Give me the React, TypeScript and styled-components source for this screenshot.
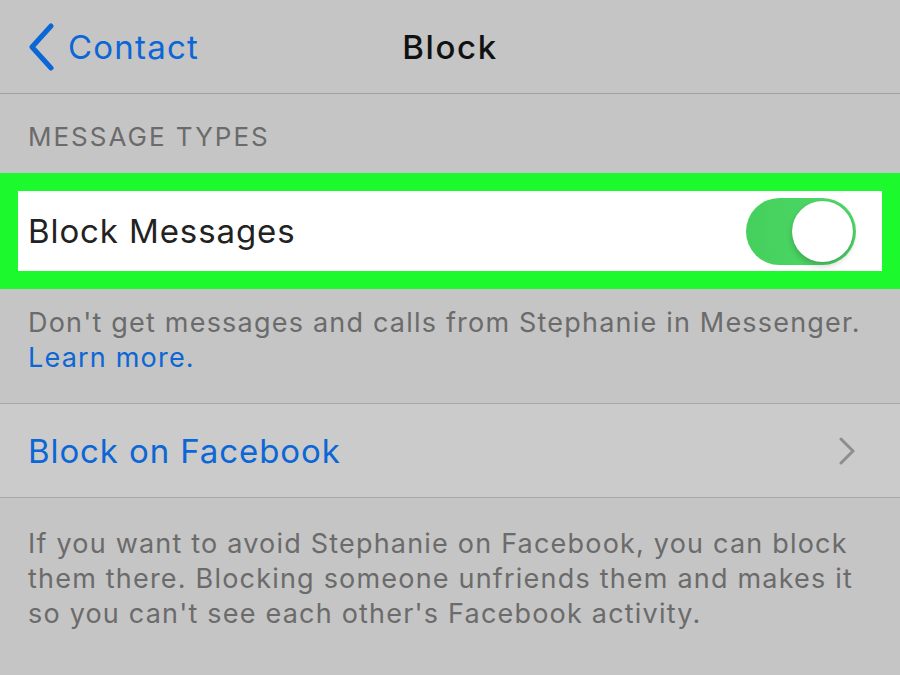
import styled, { createGlobalStyle } from 'styled-components';

const GlobalStyle = createGlobalStyle`
  html, body {
    margin: 0;
    padding: 0;
    background: #c5c5c5;
  }
  body {
    font-family: Inter, "Open Sans", "Liberation Sans", sans-serif;
    -webkit-font-smoothing: antialiased;
  }
`;

const Screen = styled.div`
  width: 900px;
  height: 675px;
  overflow: hidden;
  background: #c5c5c5;
`;

const NavBar = styled.div`
  height: 94px;
  display: grid;
  grid-template-columns: 1fr auto 1fr;
  align-items: center;
  border-bottom: 1px solid #a2a2a2;
  box-sizing: border-box;
`;

const BackLink = styled.div`
  display: flex;
  align-items: center;
  gap: 13px;
  padding-left: 28px;
  color: #0b66d6;
  font-size: 33px;
  letter-spacing: 1.2px;
  svg {
    width: 27px;
    height: 48px;
  }
`;

const Title = styled.div`
  font-size: 33px;
  font-weight: 500;
  color: #111;
  letter-spacing: 1.6px;
`;

const SectionHeader = styled.div`
  padding: 26px 28px 0;
  height: 79px;
  box-sizing: border-box;
  font-size: 26px;
  color: #6b6b6b;
  letter-spacing: 2px;
  line-height: 34px;
`;

const Highlight = styled.div`
  border: 18px solid #1cf92c;
`;

const ToggleRow = styled.div`
  height: 80px;
  background: #fff;
  display: flex;
  align-items: center;
  justify-content: space-between;
  padding: 0 26px 0 10px;
`;

const RowLabel = styled.span<{ $link?: boolean }>`
  font-size: 33px;
  letter-spacing: 0.9px;
  color: ${p => (p.$link ? '#0b66d6' : '#222')};
`;

const Switch = styled.div`
  position: relative;
  width: 110px;
  height: 67px;
  border-radius: 34px;
  background: linear-gradient(90deg, #45d05e, #4fd867);
`;

const Knob = styled.div`
  position: absolute;
  top: 3px;
  right: 3px;
  width: 61px;
  height: 61px;
  border-radius: 50%;
  background: #fff;
  box-shadow: 0 4px 6px rgba(0, 0, 0, 0.18), 0 0 1px rgba(0, 0, 0, 0.2);
`;

const Note = styled.p`
  margin: 0;
  padding: 16px 18px 0 28px;
  font-size: 27px;
  line-height: 35px;
  color: #6b6b6b;
  letter-spacing: 1.2px;
`;

const Link = styled.span`
  color: #0b66d6;
`;

const FirstNote = styled(Note)`
  height: 114px;
  box-sizing: border-box;
`;

const Cell = styled.div`
  height: 95px;
  box-sizing: border-box;
  border-top: 1px solid #a8a8a8;
  border-bottom: 1px solid #a8a8a8;
  background: #cbcbcb;
  display: flex;
  align-items: center;
  justify-content: space-between;
  padding: 0 44px 0 28px;
  svg {
    width: 17px;
    height: 28px;
  }
`;

const SecondNote = styled(Note)`
  padding-top: 28px;
`;

const BackChevron = () => (
  <svg viewBox="0 0 27 48" fill="none">
    <path d="M23 3 L4 24 L23 45" stroke="#0b66d6" strokeWidth="5" strokeLinecap="round" strokeLinejoin="round" />
  </svg>
);

const RowChevron = () => (
  <svg viewBox="0 0 17 28" fill="none">
    <path d="M2 2 L14 14 L2 26" stroke="#8e8e8e" strokeWidth="3" strokeLinecap="round" strokeLinejoin="round" />
  </svg>
);

const App = () => {
  return (
    <>
      <GlobalStyle />
      <Screen>
        <NavBar>
          <BackLink>
            <BackChevron />
            Contact
          </BackLink>
          <Title>Block</Title>
          <div />
        </NavBar>
        <SectionHeader>MESSAGE TYPES</SectionHeader>
        <Highlight>
          <ToggleRow>
            <RowLabel>Block Messages</RowLabel>
            <Switch>
              <Knob />
            </Switch>
          </ToggleRow>
        </Highlight>
        <FirstNote>
          Don't get messages and calls from Stephanie in Messenger.
          <br />
          <Link>Learn more.</Link>
        </FirstNote>
        <Cell>
          <RowLabel $link>Block on Facebook</RowLabel>
          <RowChevron />
        </Cell>
        <SecondNote>
          If you want to avoid Stephanie on Facebook, you can block them there. Blocking someone unfriends them and makes it so you can't see each other's Facebook activity.
        </SecondNote>
      </Screen>
    </>
  );
};

export default App;
